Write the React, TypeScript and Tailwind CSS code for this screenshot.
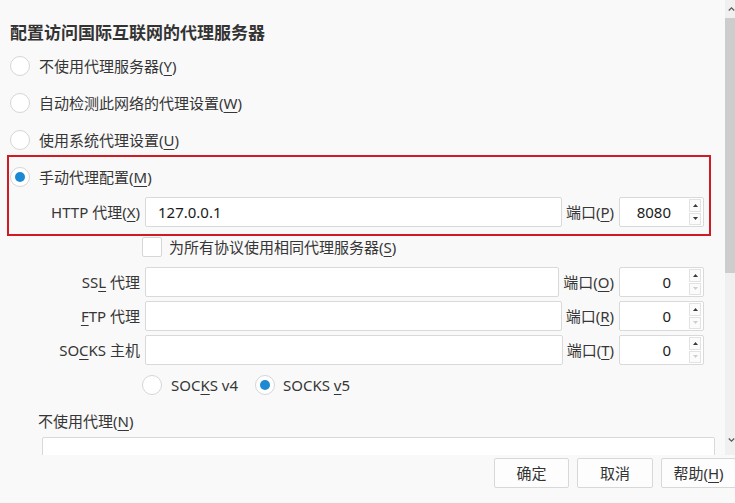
import clsx from 'clsx';

const font = "font-['Noto_Sans','Noto_Sans_CJK_SC',sans-serif]";

const Key = ({ k }: { k: string }) => <u className="underline-offset-[3px] decoration-1">{k}</u>;

const Radio = ({ checked = false }: { checked?: boolean }) => (
  <span className="w-[20px] h-[20px] rounded-full border border-[#d6d6d6] bg-white flex items-center justify-center shrink-0">
    {checked && <span className="w-[10px] h-[10px] rounded-full bg-[#1d89d3]" />}
  </span>
);

const Spinner = ({ downDisabled }: { downDisabled: boolean }) => (
  <div className="w-[12px] h-[26px] mr-[2px] flex flex-col gap-[1px]">
    <div className="flex-1 border border-[#e2e2e2] bg-[#fbfbfb] flex items-center justify-center">
      <svg width="5" height="3" viewBox="0 0 5 3">
        <path d="M0 3 L2.5 0 L5 3 Z" fill="#3a3a3a" />
      </svg>
    </div>
    <div className="flex-1 border border-[#e2e2e2] bg-[#fbfbfb] flex items-center justify-center">
      <svg width="5" height="3" viewBox="0 0 5 3">
        <path d="M0 0 L2.5 3 L5 0 Z" fill={downDisabled ? '#cfcfcf' : '#3a3a3a'} />
      </svg>
    </div>
  </div>
);

interface ProxyRowProps {
  label: React.ReactNode;
  value?: string;
  portKey: string;
  port: string;
  labelWidth: string;
}

const ProxyRow = ({ label, value = '', portKey, port, labelWidth }: ProxyRowProps) => (
  <div className="h-[30px] flex items-center">
    <div className={clsx('text-right shrink-0 whitespace-nowrap', labelWidth)}>{label}</div>
    <div className="ml-[5px] flex-1 h-full bg-white border border-[#d9d9d9] rounded-[2px] flex items-center pl-[12px] text-[#1a1a1a]">
      {value}
    </div>
    <div className="pl-[4px] pr-[5px] whitespace-nowrap">
      端口(<Key k={portKey} />)
    </div>
    <div className="w-[85px] h-full bg-white border border-[#d9d9d9] rounded-[2px] flex items-center shrink-0">
      <span className="flex-1 text-right pr-[18px] text-[#1a1a1a]">{port}</span>
      <Spinner downDisabled={port === '0'} />
    </div>
  </div>
);

const Chevron = ({ up }: { up: boolean }) => (
  <svg width="9" height="6" viewBox="0 0 9 6" className="ml-[3px]">
    <path d={up ? 'M1 5 L4.5 1.5 L8 5' : 'M1 1 L4.5 4.5 L8 1'} fill="none" stroke="#5a5a5a" strokeWidth="1.6" />
  </svg>
);

const App = () => {
  return (
    <div className={clsx('w-[735px] h-[503px] overflow-hidden bg-[#f9f9f9] flex flex-col text-[15px] leading-[20px] text-[#363636]', font)}>
      <div className="h-[455px] flex shrink-0">
        <div className="flex-1 overflow-hidden pl-[10px]">
          <h1 className="mt-[23px] h-[20px] text-[17px] leading-[20px] font-bold text-[#333]">配置访问国际互联网的代理服务器</h1>
          <div className="mt-[4px]">
            <div className="h-[37px] flex items-center gap-[9px]">
              <Radio />
              <span>
                不使用代理服务器(<Key k="Y" />)
              </span>
            </div>
            <div className="h-[37px] flex items-center gap-[9px]">
              <Radio />
              <span>
                自动检测此网络的代理设置(<Key k="W" />)
              </span>
            </div>
            <div className="h-[37px] flex items-center gap-[9px]">
              <Radio />
              <span>
                使用系统代理设置(<Key k="U" />)
              </span>
            </div>
          </div>

          <div className="-mt-[3px] -ml-[3px] w-[704px] h-[81px] border-2 border-[#d01a24]">
            <div className="h-[40px] flex items-center gap-[9px] pl-[1px]">
              <Radio checked />
              <span>
                手动代理配置(<Key k="M" />)
              </span>
            </div>
            <div className="pr-[5px]">
              <ProxyRow
                labelWidth="w-[131px]"
                label={
                  <>
                    HTTP 代理(<Key k="X" />)
                  </>
                }
                value="127.0.0.1"
                portKey="P"
                port="8080"
              />
            </div>
          </div>

          <div className="h-[22px] flex items-center pl-[132px]">
            <span className="w-[20px] h-[20px] border border-[#d6d6d6] bg-white rounded-[2px] shrink-0" />
            <span className="ml-[7px]">
              为所有协议使用相同代理服务器(<Key k="S" />)
            </span>
          </div>

          <div className="mt-[9px] w-[694px] flex flex-col gap-[4px]">
            <ProxyRow
              labelWidth="w-[130px]"
              label={
                <>
                  SS<Key k="L" /> 代理
                </>
              }
              portKey="O"
              port="0"
            />
            <ProxyRow
              labelWidth="w-[130px]"
              label={
                <>
                  <Key k="F" />TP 代理
                </>
              }
              portKey="R"
              port="0"
            />
            <ProxyRow
              labelWidth="w-[130px]"
              label={
                <>
                  SO<Key k="C" />KS 主机
                </>
              }
              portKey="T"
              port="0"
            />
          </div>

          <div className="h-[40px] flex items-center pl-[132px]">
            <div className="w-[113px] flex items-center gap-[9px]">
              <Radio />
              <span>
                SOC<Key k="K" />S v4
              </span>
            </div>
            <div className="flex items-center gap-[8px]">
              <Radio checked />
              <span>
                SOCKS <Key k="v" />5
              </span>
            </div>
          </div>

          <div className="h-[32px] flex items-center pl-[28px]">
            不使用代理(<Key k="N" />)
          </div>
          <div className="ml-[32px] w-[673px] h-[60px] bg-white border border-[#d9d9d9] rounded-[2px]" />
        </div>

        <div className="w-[10px] h-full bg-[#f0f0f0] flex flex-col shrink-0">
          <div className="h-[18px] flex items-center">
            <Chevron up />
          </div>
          <div className="h-[255px] bg-[#cdcdcd]" />
          <div className="flex-1" />
          <div className="h-[24px] flex items-start pt-[6px]">
            <Chevron up={false} />
          </div>
        </div>
      </div>

      <div className="flex-1 pl-[494px] pt-[3px] flex gap-[8px]">
        {['确定', '取消', '帮助'].map((b, i) => (
          <button
            key={b}
            className={clsx(
              'h-[30px] shrink-0 bg-[#fdfdfd] border border-[#d8d8d8] rounded-[2px] text-[15px] text-[#333] flex items-center justify-center',
              i === 1 ? 'w-[76px]' : 'w-[75px]',
            )}
          >
            {b}
            {i === 2 && (
              <>
                (<Key k="H" />)
              </>
            )}
          </button>
        ))}
      </div>
    </div>
  );
};

export default App;
